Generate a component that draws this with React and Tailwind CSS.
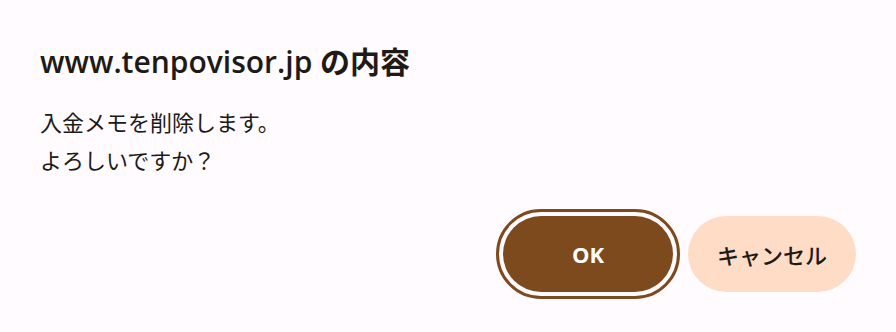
export default function App() {
  return (
    <div className="w-[896px] h-[332px] bg-[#fffbff] text-[#201a17] px-[40px] pt-[40px] flex flex-col">
      <h1 className="text-[30px] leading-[44px] font-semibold font-['Open_Sans','Noto_Sans_CJK_JP',sans-serif]">
        www.tenpovisor.jp の内容
      </h1>
      <div className="mt-[18px] text-[22px] leading-[38px] font-['Noto_Sans_CJK_JP',sans-serif]">
        <p>入金メモを削除します。</p>
        <p>よろしいですか？</p>
      </div>
      <div className="mt-auto mb-[40px] flex justify-end gap-[15px]">
        <button className="w-[170px] h-[76px] rounded-full bg-[#7d4a1e] text-white text-[22px] font-bold outline-[3px] outline-solid outline-[#7d4a1e] outline-offset-4 font-['Open_Sans','Noto_Sans_CJK_JP',sans-serif]">
          OK
        </button>
        <button className="w-[168px] h-[76px] rounded-full bg-[#ffdcc6] text-[#201a17] text-[22px] font-medium font-['Noto_Sans_CJK_JP',sans-serif]">
          キャンセル
        </button>
      </div>
    </div>
  );
}
